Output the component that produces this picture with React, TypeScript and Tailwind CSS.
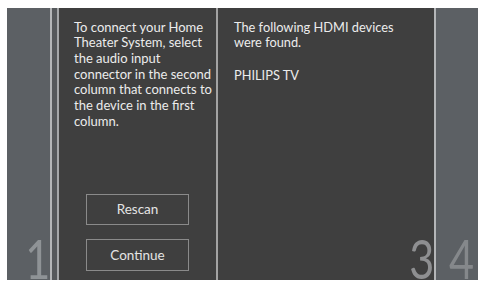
import React from "react";

const font = { fontFamily: '"Lato", "Open Sans", sans-serif' };

export default function App() {
  return (
    <div className="w-[484px] h-[284px] bg-white pt-[8px] pl-[7px] pr-[6px] pb-[4px]" style={font}>
      <div className="flex h-[272px] w-[471px] overflow-hidden bg-[#5b5f62]">
        {/* left side panel */}
        <div className="relative w-[43px] bg-[#5c6064] overflow-hidden">
          <span className="absolute right-0 bottom-0 origin-bottom-right scale-x-[0.8] text-[54px] leading-[42px] text-[#8f9396]">1</span>
        </div>
        <div className="w-[2px] bg-[#b4b6b8]" />
        <div className="w-[5px] bg-[#55585b]" />
        <div className="w-[2px] bg-[#a5a7a9]" />
        {/* left dark panel */}
        <div className="flex w-[157px] flex-col bg-[#3f3f3f] pl-[15px] pt-[12px] text-[13px] text-[#ececec]">
          <div className="leading-[15px]">
            <div>To connect your Home</div>
            <div>Theater System, select</div>
          </div>
          <div className="mt-[1px] leading-[15.5px]">
            <div>the audio input</div>
            <div>connector in the second</div>
            <div>column that connects to</div>
            <div>the device in the first</div>
            <div className="mt-[1px]">column.</div>
          </div>
          <div className="mt-auto mb-[9px] flex flex-col gap-[14px] pl-[12px]">
            <div className="flex h-[31px] w-[103px] items-center justify-center border-[1.5px] border-[#8a8a8a] text-[13.5px] text-[#e4e4e4]">Rescan</div>
            <div className="flex h-[32px] w-[103px] items-center justify-center border-[1.5px] border-[#8a8a8a] text-[13.5px] text-[#e4e4e4]">Continue</div>
          </div>
        </div>
        <div className="w-[2px] bg-[#a3a3a3]" />
        {/* right dark panel */}
        <div className="relative w-[216px] bg-[#3f3f3f] pl-[16px] pt-[12px] text-[12.8px] text-[#ececec] overflow-hidden">
          <div className="leading-[15px]">
            <div>The following HDMI devices</div>
            <div>were found.</div>
          </div>
          <div className="mt-[18px] leading-[15px]">PHILIPS TV</div>
          <span className="absolute right-0 bottom-0 origin-bottom-right scale-x-[0.8] text-[54px] leading-[42px] text-[#8e8f91]">3</span>
        </div>
        <div className="w-[2px] bg-[#b4b6b8]" />
        {/* right side panel */}
        <div className="relative flex-1 bg-[#5c6064] overflow-hidden">
          <span className="absolute left-[13px] bottom-0 origin-bottom-left scale-x-[0.8] text-[54px] leading-[42px] text-[#85888b]">4</span>
        </div>
      </div>
    </div>
  );
}
